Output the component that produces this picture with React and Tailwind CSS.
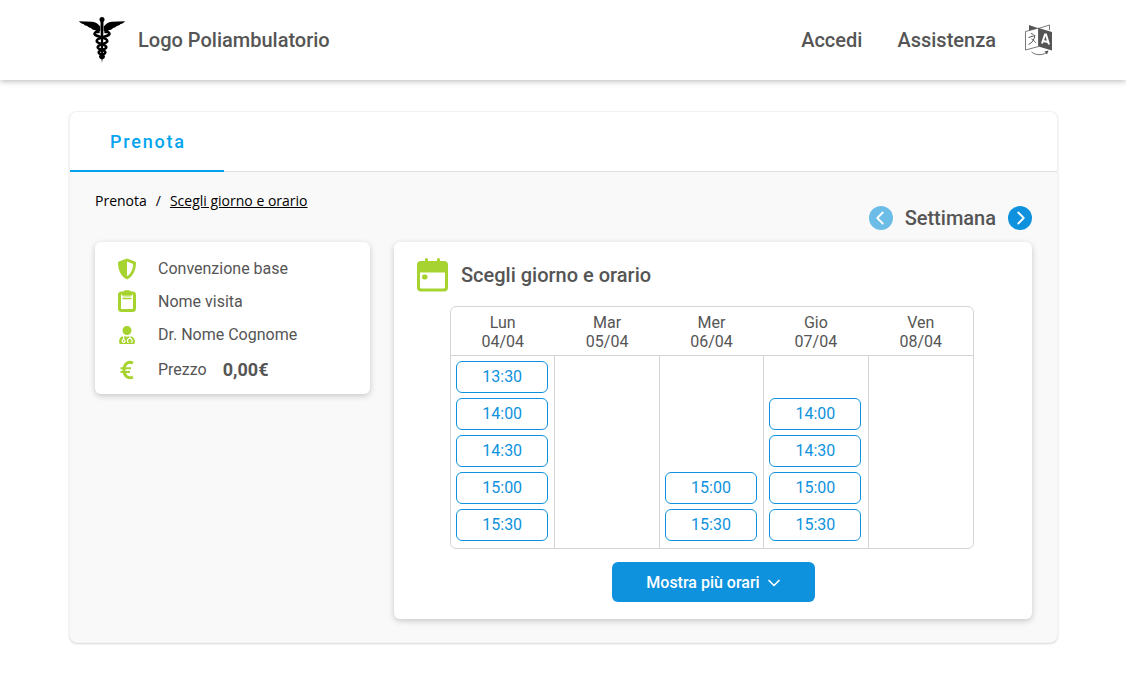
import { useState } from "react";
import { FaUserMd } from "react-icons/fa";
import { ChevronDown, ChevronLeft, ChevronRight } from "lucide-react";

const days = [
  { name: "Lun", date: "04/04", slots: ["13:30", "14:00", "14:30", "15:00", "15:30"] },
  { name: "Mar", date: "05/04", slots: [] },
  { name: "Mer", date: "06/04", slots: ["15:00", "15:30"] },
  { name: "Gio", date: "07/04", slots: ["14:00", "14:30", "15:00", "15:30"] },
  { name: "Ven", date: "08/04", slots: [] },
];

const times = ["13:30", "14:00", "14:30", "15:00", "15:30"];

function CaduceusLogo() {
  return (
    <svg className="h-[46px] w-[46px]" viewBox="0 0 46 46" aria-hidden="true">
      <circle cx="23" cy="2.600" r="2.500" />
      <path d="M21.500 4h3l-.6 34-.9 8-.9-8z" />
      <path d="M21.300 9.500C19 7 17 5 13 4.800L0 4.200c1 1.500 2.500 2.400 4.500 2.800.7 1.200 2 1.700 3.800 2 .8 1.200 2 1.700 3.700 2 1 1.500 2.400 2 4 2 1.300 1.500 3.200 1.600 5.300 1z" />
      <path d="M24.700 9.500C27 7 29 5 33 4.800l13-.6c-1 1.500-2.500 2.400-4.500 2.800-.7 1.200-2 1.700-3.800 2-.8 1.200-2 1.700-3.700 2-1 1.500-2.400 2-4 2-1.300 1.500-3.200 1.600-5.300 1z" />
      <g fill="none" stroke="#000" strokeLinecap="round">
        <path strokeWidth="2.600" d="M19.500 15c-3.500-.5-4.800 1.500-3.200 3 2 1.800 12 2.600 12 6 0 3-9.600 3-9.600 6.200 0 2.600 7.600 2.400 7.600 5 0 2.300-5 2.200-5 4.200 0 .8.600 1.200 1.200 1.600" />
        <path strokeWidth="2.600" d="M26.500 15c3.500-.5 4.800 1.500 3.200 3-2 1.800-12 2.600-12 6 0 3 9.600 3 9.600 6.200 0 2.600-7.600 2.400-7.600 5 0 2.300 5 2.200 5 4.200 0 .8-.6 1.200-1.200 1.600" />
      </g>
    </svg>
  );
}

function TranslateIcon() {
  return (
    <svg className="h-8 w-7" viewBox="0 0 28 32" fill="none" stroke="#555" aria-hidden="true">
      <path fill="#555" stroke="none" d="M4 1l10 3.500L4 8z" />
      <path strokeWidth=".8" d="M13.500 4.500L24.500 1v5" />
      <path fill="#fff" strokeWidth=".8" d="M.5 7.500l13-3.500v18.500l-13 3.500z" />
      <path fill="#555" stroke="none" d="M13.500 4L27 8v18.500l-13.500-4z" />
      <path strokeWidth="1" d="M6 9.500l2.500 1M3.500 13.500l6.500-2c-1 4.500-3 7.500-6.500 9M6.500 15c1.500.8 3 2 4.500 3.800" />
      <path stroke="#fff" strokeWidth="2" d="M17 19.500l3-9h1l3 10M18 17l5 1" />
      <path strokeWidth=".8" d="M6.500 28c4 3.500 11 3.500 15 .5" />
      <path fill="#555" stroke="none" d="M19.500 27.500l4-1-1.500 4z" />
    </svg>
  );
}

function ShieldIcon() {
  return (
    <svg className="h-[22px] w-[18px]" viewBox="0 0 18 22" aria-hidden="true">
      <path fill="#a6d330" fillRule="evenodd" d="M9 .5l8 3c.6.2 1 .8 1 1.500C18 12 15 18.500 9 21.500 3 18.500 0 12 0 5c0-.7.4-1.300 1-1.500zM9 3.500v14.800c3.800-2.500 6-7 6.200-12.400z" />
    </svg>
  );
}

function ClipboardIcon() {
  return (
    <svg className="mb-px h-[22px] w-[18px]" viewBox="0 0 18 22" fill="none" stroke="#a6d330" aria-hidden="true">
      <rect x="1.500" y="3" width="15" height="17.500" rx="2" strokeWidth="3" />
      <path fill="#a6d330" stroke="none" d="M4 4V2.500L6.500.6C8 0 10 0 11.500.6L14 2.500V4c0 1.500-.8 2.500-1.800 2.500H5.800C4.800 6.500 4 5.500 4 4z" />
      <path stroke="#d6eb9d" strokeWidth="1" d="M5 6h8" />
      <path strokeWidth="1.500" d="M4.500 8.500h9" />
    </svg>
  );
}

function EuroIcon() {
  return (
    <svg className="h-5 w-[14px]" viewBox="0 0 14 20" fill="none" stroke="#a6d330" aria-hidden="true">
      <path strokeWidth="3" d="M13 3C8 .8 4 4 4 10s4 9.200 9 7" />
      <path strokeWidth="2" d="M.5 8.200h10.500M.5 12h9.500" />
    </svg>
  );
}

function CalendarIcon() {
  return (
    <svg className="h-[34px] w-[31px]" viewBox="0 0 31 34" fill="#a6d330" aria-hidden="true">
      <rect x="8" y="0" width="3" height="7" rx="1.500" />
      <rect x="20" y="0" width="3" height="7" rx="1.500" />
      <path fillRule="evenodd" d="M4 3h23a4 4 0 0 1 4 4v22.500a4 4 0 0 1-4 4H4a4 4 0 0 1-4-4V7a4 4 0 0 1 4-4zM3 14.500v14.500A1.500 1.500 0 0 0 4.500 30.500h22a1.500 1.500 0 0 0 1.500-1.500V14.500z" />
      <rect x="5" y="16.500" width="5.500" height="5" rx="2" />
    </svg>
  );
}

function Header() {
  return (
    <header className="flex h-20 items-center justify-between bg-white pl-[79px] pr-[73px] text-xl font-medium text-[#555] shadow-[0_1px_6px_rgba(0,0,0,0.3)]">
      <a href="#" className="flex items-center gap-[13px]">
        <CaduceusLogo />
        Logo Poliambulatorio
      </a>
      <nav className="flex items-center">
        <a href="#accedi">Accedi</a>
        <a href="#assistenza" className="ml-[35px]">Assistenza</a>
        <button type="button" aria-label="Cambia lingua" className="ml-[29px] cursor-pointer">
          <TranslateIcon />
        </button>
      </nav>
    </header>
  );
}

function Summary() {
  return (
    <ul className="w-[275px] shrink-0 rounded-md bg-white px-[23px] pt-[10px] pb-[5px] text-base shadow-[0_2px_6px_rgba(0,0,0,0.2)]">
      <li className="flex h-[33px] items-center gap-[22px]">
        <ShieldIcon />
        Convenzione base
      </li>
      <li className="flex h-[33px] items-center gap-[22px]">
        <ClipboardIcon />
        Nome visita
      </li>
      <li className="flex h-[33px] items-center gap-[22px]">
        <span className="flex w-[18px] justify-center"><FaUserMd className="h-[18px] w-[18px] text-[#a6d330]" /></span>
        Dr. Nome Cognome
      </li>
      <li className="flex h-[38px] items-center gap-[22px]">
        <span className="flex w-[18px] justify-center"><EuroIcon /></span>
        <span>Prezzo</span>
        <strong className="-ml-[6px] text-lg font-bold">0,00€</strong>
      </li>
    </ul>
  );
}

function Schedule() {
  const [selected, setSelected] = useState(null);

  return (
    <div className="overflow-hidden rounded-md border border-[#d5d5d5]">
      <table className="w-full table-fixed border-separate border-spacing-0 text-center text-base leading-[19px]">
        <thead>
          <tr>
            {days.map((day) => (
              <th key={day.date} scope="col" className="border-b border-[#d5d5d5] pt-[6px] pr-px pb-1 pl-0 font-normal last:pr-0">
                {day.name}
                <br />
                {day.date}
              </th>
            ))}
          </tr>
        </thead>
        <tbody>
          {times.map((time) => (
            <tr key={time} className="last:h-11">
              {days.map((day) => {
                const key = `${day.date} ${time}`;
                return (
                  <td key={key} className="h-[37px] border-r border-[#d5d5d5] pt-[5px] pr-px pb-0 pl-0 align-top last:border-r-0">
                    {day.slots.includes(time) && (
                      <button
                        type="button"
                        aria-pressed={selected === key}
                        onClick={() => setSelected(key)}
                        className="mx-auto block h-8 w-[92px] cursor-pointer rounded-md border border-[#0e92dd] pb-[2px] text-[#0e92dd] aria-pressed:bg-[#0e92dd] aria-pressed:text-white"
                      >
                        {time}
                      </button>
                    )}
                  </td>
                );
              })}
            </tr>
          ))}
        </tbody>
      </table>
    </div>
  );
}

export default function App() {
  return (
    <div className="min-h-screen bg-white font-['Roboto',sans-serif] text-[#555]">
      <Header />
      <main className="pr-[68px] pb-8 pl-[69px] pt-[31px]">
        <section className="overflow-hidden rounded-lg border border-[#f2f2f2] bg-[#f9f9f9] shadow-[0_1px_2px_rgba(0,0,0,0.15)]">
          <div className="flex h-[60px] items-stretch border-b border-[#e0e0e0] bg-white">
            <button
              type="button"
              className="-mb-px cursor-pointer border-b-2 border-[#03a4ee] pr-[38px] pl-10 pt-[2px] text-lg font-medium tracking-widest text-[#03a4ee]"
            >
              Prenota
            </button>
          </div>

          <div className="pt-[18px] pr-[25px] pb-[23px] pl-[25px]">
            <div className="flex h-[52px] items-start justify-between">
              <div className="flex gap-[9px] font-['Open_Sans',sans-serif] text-sm leading-[22px] text-black">
                <a href="#prenota">Prenota</a>
                <span>/</span>
                <a href="#orario" className="underline">Scegli giorno e orario</a>
              </div>
              <div className="flex items-center gap-3 pt-4 text-xl leading-6 font-medium">
                <button type="button" disabled aria-label="Settimana precedente" className="flex h-6 w-6 items-center justify-center rounded-full bg-[#6bbde8] text-white">
                  <ChevronLeft size={22} className="-ml-px" />
                </button>
                Settimana
                <button type="button" aria-label="Settimana successiva" className="flex h-6 w-6 cursor-pointer items-center justify-center rounded-full bg-[#0e92dd] text-white">
                  <ChevronRight size={22} className="-mr-px" />
                </button>
              </div>
            </div>

            <div className="flex items-start gap-6">
              <Summary />
              <div className="min-w-0 flex-1 rounded-md bg-white pt-4 pb-[17px] shadow-[0_2px_6px_rgba(0,0,0,0.2)]">
                <h2 className="flex items-center gap-[13px] pl-[23px] text-xl font-medium">
                  <CalendarIcon />
                  Scegli giorno e orario
                </h2>
                <div className="mt-[14px] pr-[58px] pl-14">
                  <Schedule />
                </div>
                <button
                  type="button"
                  className="mx-auto mt-[13px] flex h-10 w-[203px] cursor-pointer items-center justify-center gap-1 rounded-md bg-[#0e92dd] pt-px pl-1 text-base font-medium text-white"
                >
                  Mostra più orari
                  <ChevronDown size={20} />
                </button>
              </div>
            </div>
          </div>
        </section>
      </main>
    </div>
  );
}
